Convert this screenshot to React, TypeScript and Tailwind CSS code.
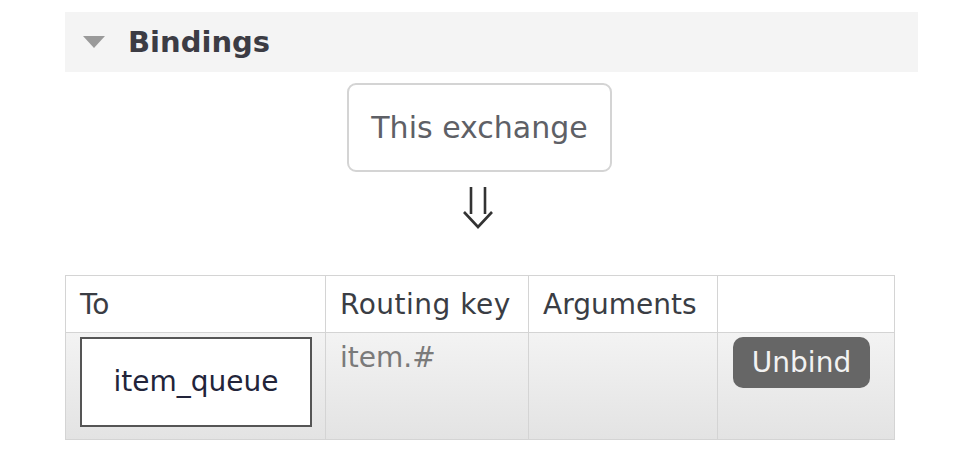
import React from 'react';

const columns = [
  { label: 'To', width: 'w-[260px]' },
  { label: 'Routing key', width: 'w-[203px]' },
  { label: 'Arguments', width: 'w-[189px]' },
  { label: '', width: 'w-[177px]' },
];

export default function App() {
  return (
    <div className="w-[955px] h-[468px] bg-white pl-[65px] pt-[12px] font-['DejaVu_Sans',Verdana,sans-serif]">
      {/* Section header */}
      <div className="w-[853px] h-[60px] bg-[#f4f4f4] flex items-center">
        <div className="ml-[18px] w-0 h-0 border-l-[11px] border-r-[11px] border-t-[12px] border-l-transparent border-r-transparent border-t-[#9a9a9a]" />
        <h2 className="ml-[23px] text-[29px] font-bold text-[#3c3c44] leading-none">Bindings</h2>
      </div>

      {/* Source exchange */}
      <div className="w-[829px] flex flex-col items-center">
        <div className="mt-[11px] w-[265px] h-[89px] border-2 border-[#d4d4d4] rounded-[9px] flex items-center justify-center">
          <span className="text-[30px] text-[#5e6066]">This exchange</span>
        </div>
        <svg className="mt-[15px] mr-[4px]" width="32" height="42" viewBox="0 0 32 42" fill="none" stroke="#333" strokeWidth="2.6">
          <path d="M9 0 V27 M23 0 V27" />
          <path d="M2 25 L16 40 L30 25" strokeLinejoin="miter" />
        </svg>
      </div>

      {/* Bindings table */}
      <table className="mt-[46px] w-[829px] border-collapse border border-[#d0d0d0] text-[28px] table-fixed">
        <thead>
          <tr className="bg-white">
            {columns.map((c) => (
              <th key={c.label} className={`${c.width} h-[57px] px-[14px] pt-[2px] text-left font-normal text-[#3a3d44] border border-[#d4d4d4]`}>
                <span className={c.label === 'Routing key' ? 'tracking-[0.5px]' : ''}>{c.label}</span>
              </th>
            ))}
          </tr>
        </thead>
        <tbody>
          <tr className="bg-gradient-to-b from-[#f3f3f3] to-[#e3e3e3] h-[107px]">
            <td className="align-top border border-[#d4d4d4] pt-[4px] pl-[14px] pr-[13px]">
              <div className="h-[90px] border-2 border-[#555] bg-white flex items-center justify-center text-[#22243a]">
                item_queue
              </div>
            </td>
            <td className="align-top border border-[#d4d4d4] px-[14px] pt-[4px] leading-[1.5] text-[#7a7a7a]">item.#</td>
            <td className="align-top border border-[#d4d4d4]" />
            <td className="align-top border border-[#d4d4d4] pt-[4px] pl-[15px]">
              <button className="w-[137px] h-[51px] rounded-[10px] bg-[#666] text-[#f2f2f2] text-[28px] leading-none">
                Unbind
              </button>
            </td>
          </tr>
        </tbody>
      </table>
    </div>
  );
}
